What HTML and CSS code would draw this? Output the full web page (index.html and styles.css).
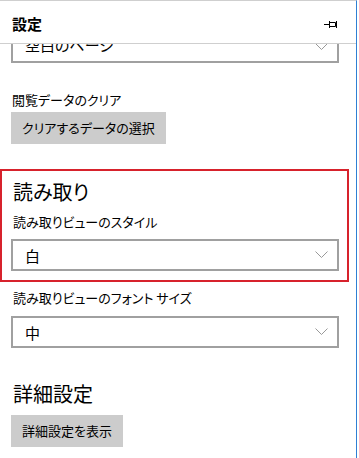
FILE: index.html
```html
<!DOCTYPE html>
<html>
<head>
<meta charset="utf-8">
<title>設定</title>
<link rel="stylesheet" href="styles.css">
</head>
<body>
<div class="panel">
 <div class="header">
  <span class="title">設定</span>
  <svg class="pin" width="14" height="9" viewBox="0 0 14 9">
   <path d="M0 4.5H5.5M5.5 1V8M6 2.5H11.5V6.5H6M12.5 1V8" fill="none" stroke="#000" stroke-width="1"/>
  </svg>
 </div>
 <div class="scroll">
  <div class="content">
   <div class="select cut"><span>空白のページ</span><svg class="chev" width="13" height="7" viewBox="0 0 13 7"><path d="M0.5 0.5L6.5 6.5L12.5 0.5" fill="none" stroke="#999" stroke-width="1"/></svg></div>

   <div class="label gap-big">閲覧データのクリア</div>
   <div class="button">クリアするデータの選択</div>

   <div class="mark">
    <div class="heading">読み取り</div>
    <div class="label">読み取りビューのスタイル</div>
    <div class="select"><span>白</span><svg class="chev" width="13" height="7" viewBox="0 0 13 7"><path d="M0.5 0.5L6.5 6.5L12.5 0.5" fill="none" stroke="#999" stroke-width="1"/></svg></div>
   </div>

   <div class="label after-mark">読み取りビューのフォント サイズ</div>
   <div class="select"><span>中</span><svg class="chev" width="13" height="7" viewBox="0 0 13 7"><path d="M0.5 0.5L6.5 6.5L12.5 0.5" fill="none" stroke="#999" stroke-width="1"/></svg></div>

   <div class="heading section">詳細設定</div>
   <div class="button">詳細設定を表示</div>
  </div>
 </div>
</div>
</body>
</html>
```

FILE: styles.css
```css
html, body {
 margin: 0;
 padding: 0;
 background: #fff;
}
body {
 font-family: "Noto Sans CJK JP", "Noto Sans", sans-serif;
 font-feature-settings: "palt";
 color: #000;
}
.panel {
 box-sizing: border-box;
 width: 357px;
 height: 458px;
 border-top: 1px solid #cfcfcf;
 border-right: 1px solid #2f7fd4;
 display: flex;
 flex-direction: column;
 overflow: hidden;
}
.header {
 box-sizing: border-box;
 height: 43px;
 flex: none;
 border-bottom: 1px solid #cfcfcf;
 display: flex;
 align-items: center;
 justify-content: space-between;
 padding: 3px 18px 0 12px;
}
.title {
 font-size: 15px;
 font-weight: bold;
}
.pin {
 display: block;
 margin-top: 1px;
}
.scroll {
 flex: 1;
 overflow: hidden;
}
.content {
 padding: 0 17px 0 11px;
}
.select {
 box-sizing: border-box;
 height: 32px;
 border: 2px solid #a0a0a0;
 display: flex;
 align-items: center;
 justify-content: space-between;
 padding: 0 9px 0 12px;
 font-size: 15px;
}
.select.cut {
 margin-top: -13px;
 padding-bottom: 5px;
}
.select.cut .chev {
 margin-top: 3px;
}
.chev {
 display: block;
 margin-top: -2px;
}
.label {
 font-size: 13px;
 line-height: 18px;
}
.label.gap-big {
 margin-top: 28px;
 padding-left: 1px;
}
.button {
 display: inline-block;
 box-sizing: border-box;
 height: 32px;
 line-height: 32px;
 padding: 0 11px;
 margin-top: 3px;
 background: #cccccc;
 font-size: 13px;
}
.mark {
 border: 2px solid #d7222c;
 margin: 25px -10px 0 -11px;
 padding: 8px 8px 9px 9px;
}
.heading {
 font-size: 20px;
 line-height: 26px;
 padding-left: 2px;
}
.mark .label {
 margin-top: 8px;
 padding-left: 2px;
}
.mark .select {
 margin-top: 8px;
}
.label.after-mark {
 margin-top: 7px;
 padding-left: 2px;
}
.label.after-mark + .select {
 margin-top: 9px;
}
.heading.section {
 margin-top: 33px;
}
.heading.section + .button {
 margin-top: 8px;
}
```
